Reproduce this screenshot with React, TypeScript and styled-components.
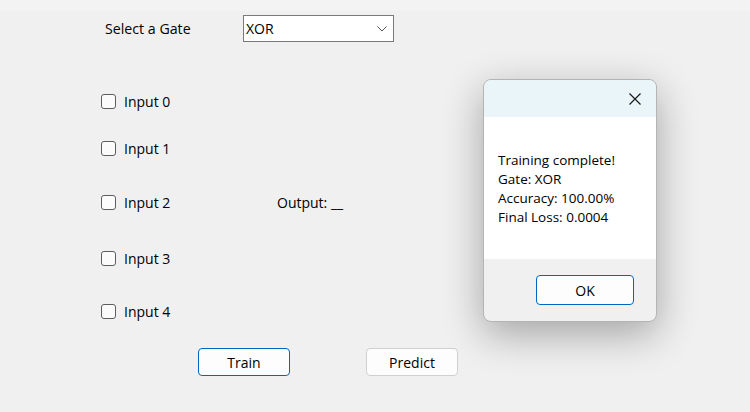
import React from "react";
import styled, { createGlobalStyle } from "styled-components";

const Global = createGlobalStyle`
  html, body { margin: 0; padding: 0; }
  body {
    background: #f0f0f0;
    font-family: "Open Sans", "Noto Sans", sans-serif;
    font-size: 14px;
    color: #000;
  }
  #root { height: 412px; }
`;

const Page = styled.div`
  position: relative;
  width: 750px;
  height: 412px;
  overflow: hidden;
  background: #f0f0f0;
`;

const TopStrip = styled.div`
  height: 11px;
  background: #f3f3f3;
`;

const Form = styled.div`
  padding-left: 102px;
`;

const GateRow = styled.div`
  display: flex;
  align-items: center;
  height: 27px;
  margin-top: 4px;
`;

const GateLabel = styled.span`
  width: 141px;
  padding-left: 3px;
  box-sizing: border-box;
  font-size: 14.2px;
`;

const SelectBox = styled.div`
  width: 151px;
  height: 27px;
  box-sizing: border-box;
  background: #fff;
  border: 1px solid #7a7a7a;
  display: flex;
  align-items: center;
  justify-content: space-between;
  padding: 0 6px 0 2px;
  font-size: 14px;
`;

const Inputs = styled.div`
  display: flex;
  flex-direction: column;
  margin-top: 46px;
`;

const InputRow = styled.div<{ $h: number }>`
  height: ${(p) => p.$h}px;
  display: flex;
  align-items: center;
`;

const Check = styled.span`
  width: 13px;
  height: 13px;
  border: 1px solid #5d5d5d;
  border-radius: 3px;
  background: #fbfbfb;
  margin: 0 8px 0 -1px;
  flex: none;
`;

const CheckLabel = styled.span`
  width: 153px;
  font-size: 14px;
`;

const OutputLabel = styled.span`
  font-size: 14px;
`;

const ButtonRow = styled.div`
  display: flex;
  margin-top: 24px;
  padding-left: 96px;
  gap: 76px;
`;

const Btn = styled.div<{ $primary?: boolean }>`
  width: 92px;
  height: 28px;
  box-sizing: border-box;
  border-radius: 4px;
  background: #fdfdfd;
  border: ${(p) => (p.$primary ? "1.5px solid #0067c0" : "1px solid #d0d0d0")};
  display: flex;
  align-items: center;
  justify-content: center;
  font-size: 14px;
`;

const Dialog = styled.div`
  position: absolute;
  left: 483px;
  top: 79px;
  width: 174px;
  height: 243px;
  box-sizing: border-box;
  border: 1px solid #b4b4b4;
  border-radius: 8px;
  overflow: hidden;
  display: flex;
  flex-direction: column;
  box-shadow: 0 12px 40px rgba(0, 0, 0, 0.32);
  background: #f0f0f0;
`;

const TitleBar = styled.div`
  height: 37px;
  flex: none;
  background: #e9f5f8;
  display: flex;
  justify-content: flex-end;
  align-items: center;
  padding-right: 15px;
`;

const DialogBody = styled.div`
  height: 142px;
  flex: none;
  background: #fff;
  padding: 34px 0 0 14px;
  box-sizing: border-box;
  font-size: 13.5px;
  line-height: 19px;
`;

const Footer = styled.div`
  flex: 1;
  display: flex;
  justify-content: flex-end;
  align-items: flex-start;
  padding: 16px 22px 0 0;
`;

const OkBtn = styled(Btn)`
  width: 98px;
  height: 30px;
`;

export default function App() {
  return (
    <Page>
      <Global />
      <TopStrip />
      <Form>
        <GateRow>
          <GateLabel>Select a Gate</GateLabel>
          <SelectBox>
            <span>XOR</span>
            <svg width="10" height="6" viewBox="0 0 10 6">
              <path d="M0.5 0.5 L5 5 L9.5 0.5" fill="none" stroke="#555" strokeWidth="1" />
            </svg>
          </SelectBox>
        </GateRow>
        <Inputs>
          <InputRow $h={26}>
            <Check />
            <CheckLabel>Input 0</CheckLabel>
          </InputRow>
          <InputRow $h={21} />
          <InputRow $h={26}>
            <Check />
            <CheckLabel>Input 1</CheckLabel>
          </InputRow>
          <InputRow $h={28} />
          <InputRow $h={26}>
            <Check />
            <CheckLabel>Input 2</CheckLabel>
            <OutputLabel>Output: __</OutputLabel>
          </InputRow>
          <InputRow $h={30} />
          <InputRow $h={26}>
            <Check />
            <CheckLabel>Input 3</CheckLabel>
          </InputRow>
          <InputRow $h={27} />
          <InputRow $h={26}>
            <Check />
            <CheckLabel>Input 4</CheckLabel>
          </InputRow>
        </Inputs>
        <ButtonRow>
          <Btn $primary>Train</Btn>
          <Btn>Predict</Btn>
        </ButtonRow>
      </Form>
      <Dialog>
        <TitleBar>
          <svg width="12" height="12" viewBox="0 0 12 12">
            <path d="M0.5 0.5 L11.5 11.5 M11.5 0.5 L0.5 11.5" stroke="#1a1a1a" strokeWidth="1.2" />
          </svg>
        </TitleBar>
        <DialogBody>
          <div>Training complete!</div>
          <div>Gate: XOR</div>
          <div>Accuracy: 100.00%</div>
          <div>Final Loss: 0.0004</div>
        </DialogBody>
        <Footer>
          <OkBtn $primary>OK</OkBtn>
        </Footer>
      </Dialog>
    </Page>
  );
}
